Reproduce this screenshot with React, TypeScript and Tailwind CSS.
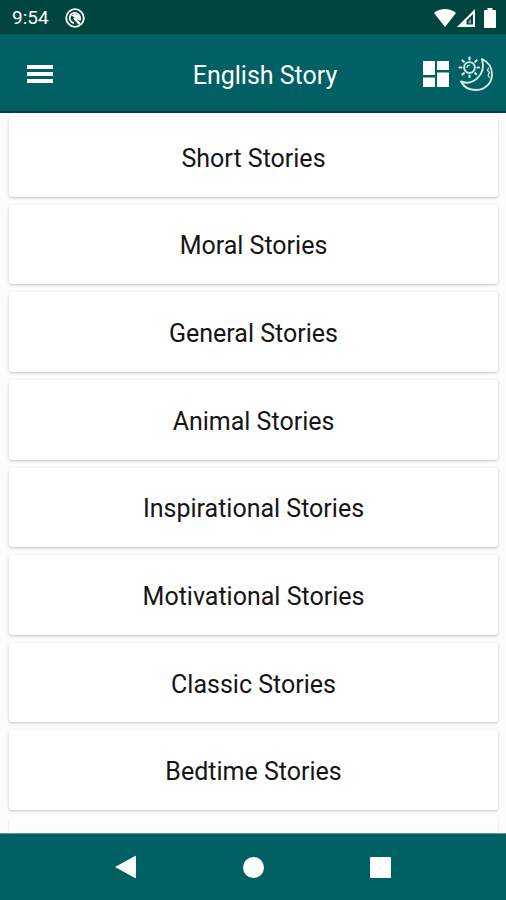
const stories = [
  "Short Stories",
  "Moral Stories",
  "General Stories",
  "Animal Stories",
  "Inspirational Stories",
  "Motivational Stories",
  "Classic Stories",
  "Bedtime Stories",
];

function StatusBar() {
  return (
    <div className="flex h-[34px] items-center justify-between bg-[#00463e] pt-px pr-1.5 pl-3 text-white">
      <div className="flex items-center gap-4">
        <span className="text-[19px] leading-6">9:54</span>
        <svg viewBox="0 0 20 20" className="size-5" fill="none" stroke="currentColor" aria-hidden="true">
          <circle cx="10" cy="10" r="8.8" strokeWidth="1.8" />
          <path d="M14.500 12.500A5.200 5.200 0 1 0 9 15.200" strokeWidth="1.8" />
          <path d="M9 10 14.600 15.800" strokeWidth="2.4" />
          <path d="M6.500 7.500q3.500-3 7 0 1.500 2.500 .5 5z" fill="currentColor" stroke="none" />
        </svg>
      </div>
      <div className="flex items-center gap-[5px]" aria-hidden="true">
        <div className="flex items-center gap-px">
          <svg viewBox="0 0 22 18" className="h-[18px] w-[22px]" fill="currentColor">
            <path d="M0 4C6.200-1.300 15.800-1.300 22 4L11 18z" />
          </svg>
          <svg viewBox="0 0 18 18" className="size-[18px]" fill="currentColor" fillRule="evenodd">
            <path d="M18 0V18H0zM16 5 9.500 11.500V15.500H16z" />
            <path d="M11.500 12.500 14 9.500v5h-2.500z" fillOpacity="0.5" />
          </svg>
        </div>
        <svg viewBox="0 0 20 20" className="size-5" fill="currentColor">
          <path d="M7.500 0h5v2H15q1 0 1 1v16q0 1-1 1H5q-1 0-1-1V3q0-1 1-1h2.500z" />
        </svg>
      </div>
    </div>
  );
}

function Header() {
  return (
    <header className="grid h-[79px] grid-cols-[1fr_auto_1fr] items-center border-b-2 border-[#003c50] bg-[#006064] pt-0.5 pr-3 pl-6 text-white">
      <button aria-label="Open menu" className="flex size-8 items-center justify-center">
        <svg viewBox="0 0 26 20" className="h-5 w-[26px]" fill="currentColor" aria-hidden="true">
          <path d="M0 1h26v4H0zM0 8h26v4H0zM0 15h26v4H0z" />
        </svg>
      </button>
      <h1 className="pl-3 pt-1 text-[25px] leading-8">English Story</h1>
      <div className="flex items-center justify-end gap-1.5">
        <button aria-label="Change layout" className="flex size-8 items-center justify-center">
          <svg viewBox="0 0 26 26" className="size-[26px]" fill="currentColor" aria-hidden="true">
            <path d="M0 0h12v14H0zM14 0h12v9H14zM0 16.500h12V26H0zM14 11.500h12V26H14z" />
          </svg>
        </button>
        <button aria-label="Toggle dark mode" className="flex size-9 items-center justify-center">
          <svg
            viewBox="0 0 36 36"
            className="size-9"
            fill="none"
            stroke="#d5e8e8"
            strokeWidth="1.900"
            strokeLinecap="round"
            strokeLinejoin="round"
            aria-hidden="true"
          >
            <circle cx="11.500" cy="11.500" r="5.400" />
            <path
              d="M11.500 1.500v2M11.500 19.500v1.500M1.500 11.500h2M19.500 11.500H21M4.500 4.500l1.300 1.300M17.200 17.200l1 1M4.500 18.500l1.300-1.300M17.200 5.800l1.300-1.300"
              strokeWidth="2.2"
            />
            <path d="M9 11.500q0-2 2.500-2.500" strokeWidth="1.2" />
            <path d="M24 3C30.500 6 34 12 34 18.500 34 27 27 34 18.500 34 11.500 34 5.500 31 3 25.500 15 30 28.500 19 24 3z" />
            <path d="M30.500 12l-1 2.500 2 2-1.500 3 1.500 2" strokeWidth="1.2" />
          </svg>
        </button>
      </div>
    </header>
  );
}

function NavigationBar() {
  return (
    <nav className="flex h-[67px] items-center justify-center gap-[95px] border-t border-[#5d9296] bg-[#006064] text-white">
      <button aria-label="Back" className="flex size-8 items-center justify-center">
        <svg viewBox="0 0 24 24" className="size-6" fill="currentColor" aria-hidden="true">
          <path d="M1 12 21 1q1-.5 1 .5v21q0 1-1 .5z" />
        </svg>
      </button>
      <button aria-label="Home" className="flex size-8 items-center justify-center">
        <span className="size-[21px] rounded-full bg-white" />
      </button>
      <button aria-label="Recent apps" className="flex size-8 items-center justify-center">
        <span className="size-[21px] rounded-[1px] bg-white" />
      </button>
    </nav>
  );
}

export default function App() {
  return (
    <div className="flex min-h-screen flex-col bg-[#fcfcfc] font-['Roboto',sans-serif]">
      <StatusBar />
      <Header />
      <main className="flex flex-1 flex-col gap-2 pt-1 pr-2 pl-[9px]">
        <ul className="flex flex-1 flex-col gap-2">
          {stories.map((story) => (
            <li key={story} className="flex min-h-16 flex-1">
              <button className="flex-1 rounded-[3px] bg-white pt-1 text-[25px] leading-8 text-[#151515] shadow-[0_1px_3px_rgba(0,0,0,0.22)]">
                {story}
              </button>
            </li>
          ))}
        </ul>
        <div className="-mx-px h-[15px] overflow-hidden px-px">
          <div className="h-20 rounded-[3px] bg-[#fdfdfd] shadow-[0_1px_3px_rgba(0,0,0,0.15)]" />
        </div>
      </main>
      <NavigationBar />
    </div>
  );
}
